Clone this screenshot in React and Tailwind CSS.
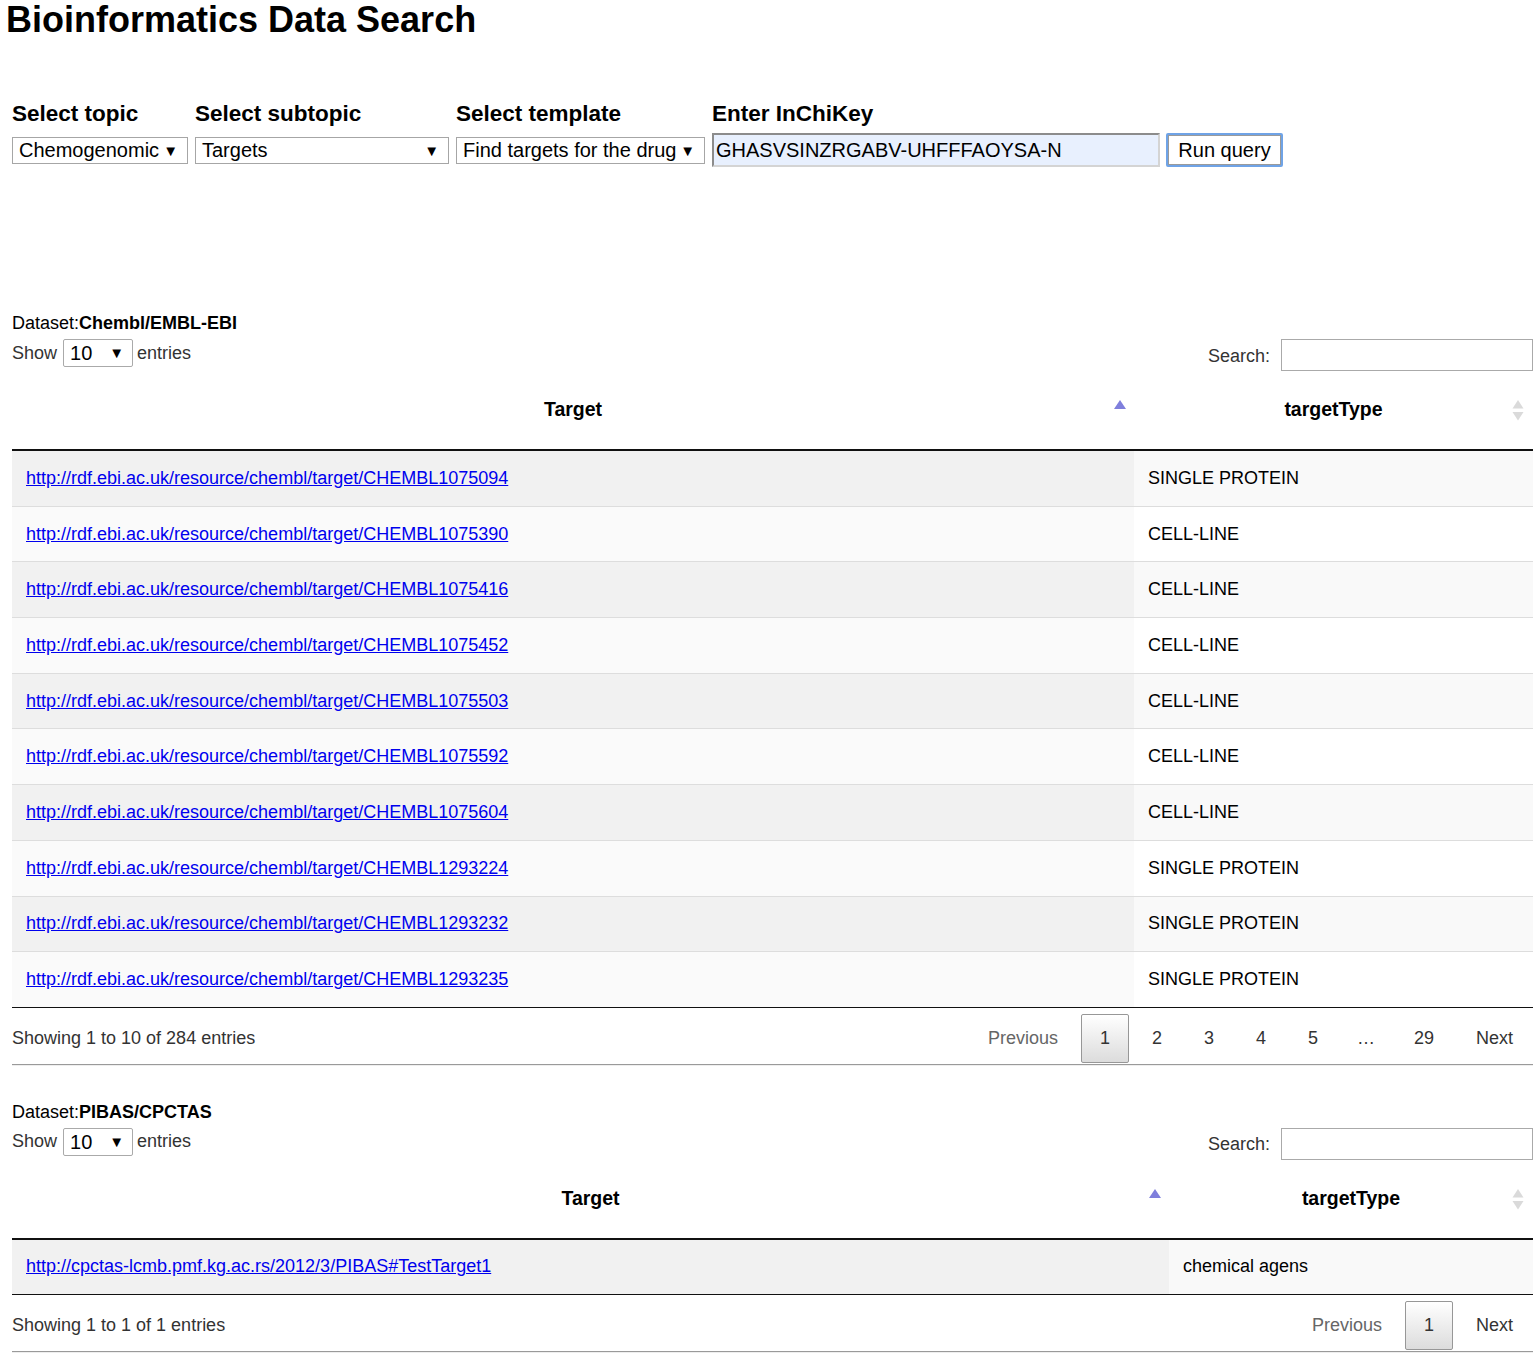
import React from 'react'

const CHEMBL_ROWS = [
  ['CHEMBL1075094', 'SINGLE PROTEIN'],
  ['CHEMBL1075390', 'CELL-LINE'],
  ['CHEMBL1075416', 'CELL-LINE'],
  ['CHEMBL1075452', 'CELL-LINE'],
  ['CHEMBL1075503', 'CELL-LINE'],
  ['CHEMBL1075592', 'CELL-LINE'],
  ['CHEMBL1075604', 'CELL-LINE'],
  ['CHEMBL1293224', 'SINGLE PROTEIN'],
  ['CHEMBL1293232', 'SINGLE PROTEIN'],
  ['CHEMBL1293235', 'SINGLE PROTEIN'],
].map(([id, type]) => ({ url: `http://rdf.ebi.ac.uk/resource/chembl/target/${id}`, type }))

const PIBAS_ROWS = [{ url: 'http://cpctas-lcmb.pmf.kg.ac.rs/2012/3/PIBAS#TestTarget1', type: 'chemical agens' }]

function FakeSelect({ value, width }) {
  return (
    <div className={`${width} h-[27px] border border-[#a6a6a6] bg-white flex items-center justify-between pl-[6px] pr-[9px] text-[20px] leading-none text-black`}>
      <span>{value}</span>
      <span className="text-[15px]">▼</span>
    </div>
  )
}

function SortAsc() {
  return (
    <svg width="12" height="9" viewBox="0 0 12 9">
      <path d="M6 0 L12 9 L0 9 Z" fill="#7f7fdc" />
    </svg>
  )
}

function SortBoth() {
  return (
    <svg width="12" height="21" viewBox="0 0 12 21">
      <path d="M6 0 L11.5 8.5 L0.5 8.5 Z" fill="#dadada" />
      <path d="M0.5 12 L11.5 12 L6 20.5 Z" fill="#dadada" />
    </svg>
  )
}

function DataTable({ name, rows, col1, info, pages }) {
  return (
    <div>
      <div className="h-[22px] leading-[22px] text-[18px] text-black">
        Dataset:<b>{name}</b>
      </div>
      <div className="mt-[5px] flex justify-between items-start h-[32px]">
        <div className="flex items-center h-[28px] text-[18px] text-[#333]">
          <span>Show</span>
          <div className="ml-[6px] w-[70px] h-[28px] border border-[#aaa] rounded-[2px] flex items-center justify-between pl-[6px] pr-[8px] text-[20px] text-black">
            <span>10</span>
            <span className="text-[15px]">▼</span>
          </div>
          <span className="ml-[4px]">entries</span>
        </div>
        <div className="flex items-center h-[32px] text-[18px] text-[#333]">
          <span className="mt-[2px]">Search:</span>
          <div className="ml-[11px] w-[252px] h-[32px] border border-[#aaa] bg-white" />
        </div>
      </div>

      <div className="mt-[10px]">
        <div className="flex h-[70px] border-b-2 border-[#111] text-[19.5px] font-bold text-black">
          <div className={`${col1} relative flex items-center justify-center pb-[10px]`}>
            Target
            <span className="absolute right-[8px] top-[19px] flex">
              <SortAsc />
            </span>
          </div>
          <div className="flex-1 relative flex items-center justify-center pb-[10px]">
            targetType
            <span className="absolute right-[9px] top-[19px] flex">
              <SortBoth />
            </span>
          </div>
        </div>
        {rows.map((r, i) => (
          <div
            key={r.url}
            className={`flex ${rows.length === 1 ? 'h-[55px]' : 'h-[55.7px]'} border-b ${i === rows.length - 1 ? 'border-[#111]' : 'border-[#ddd]'} text-[18px]`}
          >
            <div className={`${col1} flex items-center pl-[14px] ${i % 2 === 0 ? 'bg-[#f1f1f1]' : 'bg-[#fafafa]'}`}>
              <a href="#" className="text-[#0000ee] underline">{r.url}</a>
            </div>
            <div className={`flex-1 flex items-center pl-[14px] text-black ${i % 2 === 0 ? 'bg-[#f9f9f9]' : 'bg-white'}`}>
              {r.type}
            </div>
          </div>
        ))}
      </div>

      <div className="mt-[6px] flex justify-between items-center h-[49px] text-[18px] text-[#333]">
        <span>{info}</span>
        <div className="flex items-center gap-[4px] mr-px">
          <span className="h-[49px] px-[19px] flex items-center text-[#666]">Previous</span>
          {pages.map((p) =>
            p === '…' ? (
              <span key="dots" className="w-[50px] h-[49px] flex items-center justify-center">…</span>
            ) : p === '1' ? (
              <span key={p} className="w-[48px] h-[49px] flex items-center justify-center border border-[#979797] rounded-[2px] bg-gradient-to-b from-white to-[#dcdcdc] text-[#333]">
                {p}
              </span>
            ) : (
              <span key={p} className={`${p.length > 1 ? 'w-[58px]' : 'w-[48px]'} h-[49px] flex items-center justify-center`}>
                {p}
              </span>
            )
          )}
          <span className="h-[49px] px-[19px] flex items-center">Next</span>
        </div>
      </div>
      <div className="mt-px border-t border-[#9a9a9a] border-b border-b-[#eee] h-[2px]" />
    </div>
  )
}

export default function App() {
  return (
    <div className="bg-white min-h-[1355px] font-['Liberation_Sans',Arial,sans-serif] text-black">
      <h1 className="pl-[6px] text-[36px] leading-[40px] font-bold">Bioinformatics Data Search</h1>

      <div className="pl-[12px] pr-[3px]">
        {/* Query controls */}
        <div className="mt-[61px] flex">
          <div className="flex flex-col">
            <span className="h-[26px] leading-[26px] text-[22.5px] font-bold">Select topic</span>
            <div className="mt-[6px] h-[34px] flex items-center">
              <FakeSelect value="Chemogenomic" width="w-[176px]" />
            </div>
          </div>
          <div className="ml-[7px] flex flex-col">
            <span className="h-[26px] leading-[26px] text-[22.5px] font-bold">Select subtopic</span>
            <div className="mt-[6px] h-[34px] flex items-center">
              <FakeSelect value="Targets" width="w-[254px]" />
            </div>
          </div>
          <div className="ml-[7px] flex flex-col">
            <span className="h-[26px] leading-[26px] text-[22.5px] font-bold">Select template</span>
            <div className="mt-[6px] h-[34px] flex items-center">
              <FakeSelect value="Find targets for the drug" width="w-[249px]" />
            </div>
          </div>
          <div className="ml-[7px] flex flex-col">
            <span className="h-[26px] leading-[26px] text-[22.5px] font-bold">Enter InChiKey</span>
            <div className="mt-[6px] h-[34px] flex items-center">
              <div className="w-[448px] h-[34px] bg-[#e8f0fe] border-2 border-t-[#8c8c8c] border-l-[#8c8c8c] border-r-[#d4d4d4] border-b-[#d4d4d4] flex items-center pl-[2px] text-[20px]">
                GHASVSINZRGABV-UHFFFAOYSA-N
              </div>
            </div>
          </div>
          <div className="ml-[6px] flex flex-col">
            <span className="h-[26px]" />
            <div className="mt-[6px] h-[34px] flex items-center">
              <button className="w-[117px] h-[34px] border-2 border-[#6fa3e6] rounded-[2px] bg-white flex items-center justify-center text-[20px] text-black shadow-[inset_0_0_0_1px_#9a9a9a]">
                Run query
              </button>
            </div>
          </div>
        </div>

        <div className="mt-[145px]">
          <DataTable
            name="Chembl/EMBL-EBI"
            rows={CHEMBL_ROWS}
            col1="w-[1122px]"
            info="Showing 1 to 10 of 284 entries"
            pages={['1', '2', '3', '4', '5', '…', '29']}
          />
        </div>

        <div className="mt-[35px]">
          <DataTable
            name="PIBAS/CPCTAS"
            rows={PIBAS_ROWS}
            col1="w-[1157px]"
            info="Showing 1 to 1 of 1 entries"
            pages={['1']}
          />
        </div>
      </div>
    </div>
  )
}
